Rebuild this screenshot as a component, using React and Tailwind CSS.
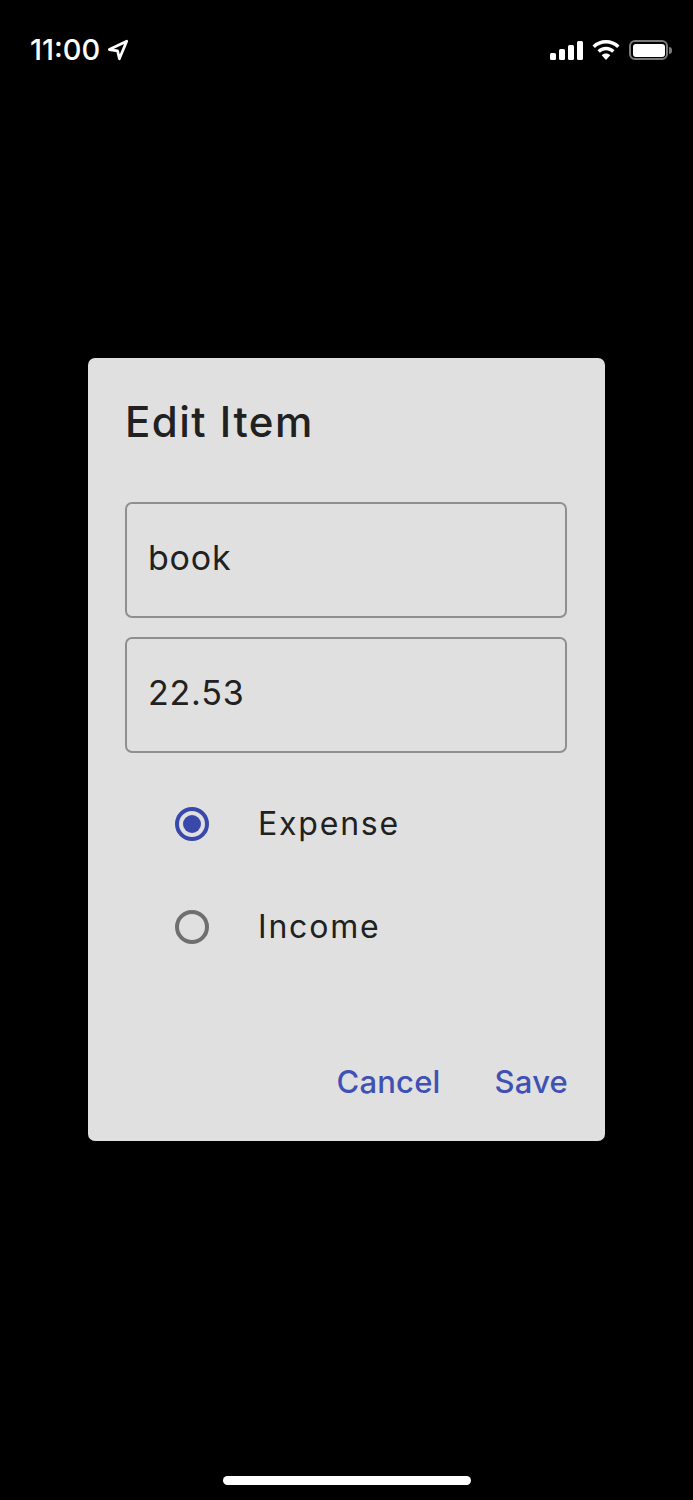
import { useState } from "react";

const LocationArrow = () => (
  <svg width="22" height="22" viewBox="0 0 24 24" fill="none" stroke="#fff" strokeWidth="3" strokeLinejoin="round">
    <path d="M2.500 11.500 21.500 2.500 13.500 21.500 11.500 13z" />
  </svg>
);

const Signal = () => (
  <div className="flex items-end gap-[3px]">
    <div className="w-[6px] h-[7px] rounded-[1.5px] bg-white" />
    <div className="w-[6px] h-[11px] rounded-[1.5px] bg-white" />
    <div className="w-[6px] h-[15px] rounded-[1.5px] bg-white" />
    <div className="w-[6px] h-[19px] rounded-[1.5px] bg-white" />
  </div>
);

const Wifi = () => (
  <svg width="28" height="20" viewBox="0 0 28 20" fill="#fff">
    <path d="M14 0C8.700 0 4 2 .5 5.400l2.400 2.600C5.800 5.200 9.700 3.500 14 3.500s8.200 1.700 11.100 4.500l2.400-2.600C24 2 19.300 0 14 0z" />
    <path d="M14 6.800c-3.300 0-6.300 1.300-8.500 3.400l2.400 2.600c1.600-1.500 3.700-2.500 6.100-2.500s4.500 1 6.100 2.500l2.400-2.600c-2.200-2.100-5.200-3.400-8.500-3.400z" />
    <path d="M14 13.500c-1.700 0-3.200.7-4.300 1.700L14 20l4.300-4.800c-1.100-1-2.600-1.700-4.300-1.700z" />
  </svg>
);

const Battery = () => (
  <div className="flex items-center gap-[1px]">
    <div className="w-[39px] h-[20px] rounded-[6px] border-2 border-[#7a7a7a] p-[1.5px]">
      <div className="w-full h-full rounded-[3px] bg-white" />
    </div>
    <div className="w-[3px] h-[7px] rounded-r-full bg-[#7a7a7a]" />
  </div>
);

const Field = ({ value, onChange }) => (
  <input
    value={value}
    onChange={(e) => onChange(e.target.value)}
    className="w-full h-[116px] px-[21px] pb-[6px] border-2 border-[#8f8f8f] rounded-[7px] bg-transparent text-[34px] tracking-[0.8px] text-[#212121] outline-none"
  />
);

const Radio = ({ label, checked, onClick }) => (
  <button onClick={onClick} className="flex items-center h-[103px] pl-[50px] w-full text-left">
    <span
      className={`flex items-center justify-center w-[34px] h-[34px] rounded-full border-[4px] ${
        checked ? "border-[#3949ab]" : "border-[#6f6f6f]"
      }`}
    >
      {checked && <span className="w-[18px] h-[18px] rounded-full bg-[#3949ab]" />}
    </span>
    <span className="ml-[49px] text-[32px] tracking-[1.8px] text-[#212121]">{label}</span>
  </button>
);

export default function App() {
  const [name, setName] = useState("book");
  const [amount, setAmount] = useState("22.53");
  const [type, setType] = useState("Expense");

  return (
    <div className="flex flex-col h-[1500px] bg-black font-['Inter','Liberation_Sans',sans-serif]">
      <header className="flex items-center justify-between h-[100px] pl-[30px] pr-[21px]">
        <div className="flex items-center gap-[7px] text-white text-[29px] font-medium">
          <span>11:00</span>
          <LocationArrow />
        </div>
        <div className="flex items-center gap-[9px]">
          <Signal />
          <Wifi />
          <Battery />
        </div>
      </header>

      <div className="flex flex-col w-[517px] h-[783px] mt-[258px] mx-auto pl-[37px] pr-[38px] bg-[#e0e0e0] rounded-[7px]">
        <h2 className="mt-[36px] h-[56px] text-[42px] leading-[56px] tracking-[1.5px] font-medium text-[#212121]">Edit Item</h2>
        <div className="flex flex-col gap-[19px] mt-[52px]">
          <Field value={name} onChange={setName} />
          <Field value={amount} onChange={setAmount} />
        </div>
        <div className="mt-[18px] pt-[1px]">
          <Radio label="Expense" checked={type === "Expense"} onClick={() => setType("Expense")} />
          <Radio label="Income" checked={type === "Income"} onClick={() => setType("Income")} />
        </div>
        <div className="flex justify-end gap-[54px] mt-auto mb-[36px] -mr-[1px] text-[31px] tracking-[0.2px] font-medium text-[#3f51b5]">
          <button>Cancel</button>
          <button>Save</button>
        </div>
      </div>

      <div className="w-[248px] h-[9px] mt-auto mb-[15px] mx-auto rounded-full bg-white" />
    </div>
  );
}
